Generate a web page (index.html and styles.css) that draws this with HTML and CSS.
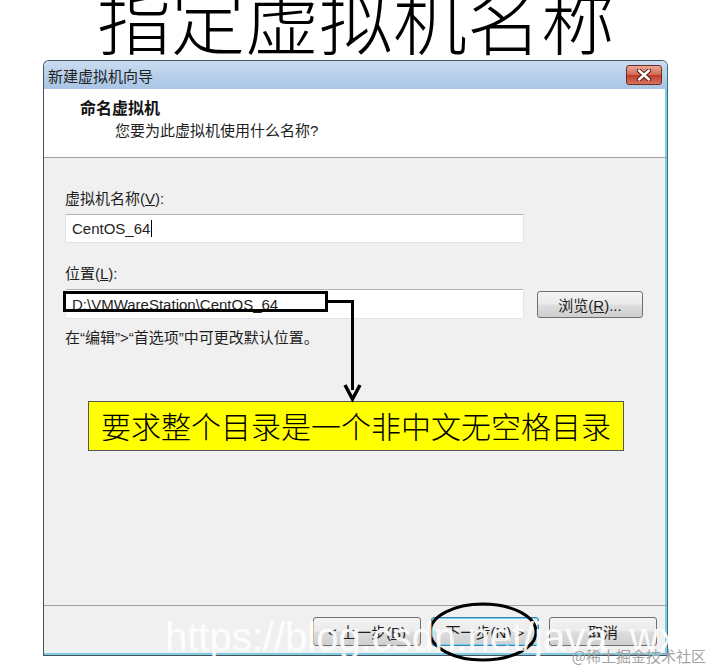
FILE: index.html
```html
<!DOCTYPE html>
<html lang="zh-CN">
<head>
    <meta charset="utf-8">
    <title>指定虚拟机名称</title>
    <link rel="stylesheet" href="styles.css">
</head>
<body>
    <div class="page">
        <h1 class="slide-title">指定虚拟机名称</h1>

        <div class="wizard">
            <div class="titlebar">
                <span class="titlebar-text">新建虚拟机向导</span>
                <button class="close-btn">
                    <svg width="16" height="12" viewBox="0 0 16 12">
                        <path d="M3 1.5 L13 10.5 M13 1.5 L3 10.5" stroke="#5a1a10" stroke-width="4.4" stroke-linecap="round"/>
                        <path d="M3 1.5 L13 10.5 M13 1.5 L3 10.5" stroke="#ffffff" stroke-width="2.4" stroke-linecap="round"/>
                    </svg>
                </button>
            </div>

            <div class="header">
                <div class="header-title">命名虚拟机</div>
                <div class="header-sub">您要为此虚拟机使用什么名称?</div>
            </div>

            <div class="body">
                <div class="label">虚拟机名称(<u>V</u>):</div>
                <div class="field">CentOS_64<span class="caret"></span></div>

                <div class="label label-gap">位置(<u>L</u>):</div>
                <div class="field-row">
                    <div class="field field-grow">D:\VMWareStation\CentOS_64</div>
                    <button class="btn btn-browse">浏览(<u>R</u>)...</button>
                </div>

                <p class="hint">在“编辑”&gt;“首选项”中可更改默认位置。</p>

                <div class="callout">要求整个目录是一个非中文无空格目录</div>
            </div>

            <div class="footer">
                <button class="btn">&lt; 上一步(<u>B</u>)</button>
                <button class="btn btn-default">下一步(<u>N</u>) &gt;</button>
                <button class="btn">取消</button>
            </div>
        </div>

        <svg class="marks" width="712" height="670" viewBox="0 0 712 670">
            <rect x="64.5" y="292.5" width="262" height="18" fill="none" stroke="#000" stroke-width="3"/>
            <path d="M326 301.5 H352.5 V390" fill="none" stroke="#000" stroke-width="3"/>
            <path d="M345 385 L352.5 399 L360 385" fill="none" stroke="#000" stroke-width="3.5" stroke-linejoin="miter"/>
            <ellipse cx="483" cy="632" rx="53" ry="28" fill="none" stroke="#000" stroke-width="3"/>
        </svg>

        <div class="watermark">https://blog.csdn.net/java_wx</div>
        <div class="credit">@稀土掘金技术社区</div>
    </div>
</body>
</html>
```

FILE: styles.css
```css
body {
    margin: 0;
    background-color: #ffffff;
    font-family: "Liberation Sans", "Noto Sans CJK SC", sans-serif;
    color: #1e1e1e;
}

.page {
    position: relative;
    width: 712px;
    height: 670px;
    overflow: hidden;
}

.slide-title {
    margin: -20px 0 0 0;
    font-family: "Noto Sans CJK SC", sans-serif;
    font-weight: 300;
    font-size: 74px;
    line-height: 74px;
    text-align: center;
    color: #000000;
}

.wizard {
    margin: 6px 0 0 43px;
    width: 623px;
    border: 1px solid #46525e;
    border-right-color: #2f6f86;
    border-radius: 6px 6px 0 0;
    background-color: #f0f0f0;
}

.titlebar {
    height: 28px;
    display: flex;
    align-items: center;
    justify-content: space-between;
    padding: 0 5px 0 4px;
    border-radius: 5px 5px 0 0;
    background: linear-gradient(#c9dcf0, #b4cde9 60%, #aac6e6);
}

.titlebar-text {
    font-family: "Noto Sans CJK SC", sans-serif;
    font-size: 15px;
    color: #222222;
}

.close-btn {
    width: 36px;
    height: 20px;
    padding: 0;
    display: flex;
    align-items: center;
    justify-content: center;
    border: 1px solid #6e2b22;
    border-radius: 3px;
    background: linear-gradient(#e9a898, #d46a55 48%, #c0392a 52%, #d9745f);
}

.header {
    height: 69px;
    padding: 9px 0 0 36px;
    box-sizing: border-box;
    background-color: #ffffff;
    border-bottom: 1px solid #a0a0a0;
    box-shadow: inset -2px 0 #7fcde2;
}

.header-title {
    font-family: "Noto Sans CJK SC", sans-serif;
    font-weight: bold;
    font-size: 16px;
    line-height: 18px;
    color: #111111;
}

.header-sub {
    margin: 6px 0 0 35px;
    font-size: 15px;
    line-height: 18px;
}

.body {
    position: relative;
    height: 447px;
    box-sizing: border-box;
    padding: 32px 21px 0 21px;
    box-shadow: inset -2px 0 #7fcde2;
}

.label {
    font-size: 15px;
    line-height: 18px;
}

.label u {
    text-decoration: underline;
}

.label-gap {
    margin-top: 22px;
}

.field {
    margin-top: 6px;
    width: 459px;
    height: 29px;
    box-sizing: border-box;
    padding-left: 6px;
    display: flex;
    align-items: center;
    background-color: #ffffff;
    border: 1px solid #dfe5ec;
    border-top-color: #abb3bd;
    border-radius: 2px;
    font-size: 15px;
}

.caret {
    width: 1px;
    height: 17px;
    margin-left: 1px;
    background-color: #000000;
}

.field-row {
    display: flex;
    align-items: center;
    gap: 13px;
    margin-top: 6px;
}

.field-row .field {
    margin-top: 0;
    height: 30px;
}

.btn {
    height: 29px;
    width: 108px;
    padding: 0;
    font-family: "Liberation Sans", "Noto Sans CJK SC", sans-serif;
    font-size: 15px;
    color: #1e1e1e;
    border: 1px solid #707070;
    border-radius: 3px;
    background: linear-gradient(#f3f3f3, #ebebeb 48%, #dddddd 52%, #cfcfcf);
}

.btn-browse {
    width: 106px;
    height: 27px;
}

.btn-default {
    border-color: #3c7fb1;
    box-shadow: inset 0 0 0 1px #6fd4f4;
}

.hint {
    margin: 10px 0 0 0;
    font-size: 15px;
    line-height: 18px;
}

.callout {
    margin: 54px 0 0 23px;
    width: 536px;
    height: 50px;
    box-sizing: border-box;
    border: 1px solid #555555;
    background-color: #ffff00;
    font-family: "Noto Sans CJK SC", sans-serif;
    font-weight: 300;
    font-size: 30px;
    line-height: 46px;
    text-align: center;
    color: #000000;
}

.footer {
    height: 50px;
    box-sizing: border-box;
    border-top: 1px solid #a0a0a0;
    padding: 11px 10px 0 0;
    display: flex;
    justify-content: flex-end;
    gap: 10px;
    box-shadow: inset -2px 0 #7fcde2, inset 0 -2px #7fcde2;
}

.marks {
    position: absolute;
    left: 0;
    top: 0;
    pointer-events: none;
}

.watermark {
    position: absolute;
    left: 165px;
    top: 617px;
    font-family: "Liberation Sans", sans-serif;
    font-size: 40px;
    line-height: 40px;
    color: rgba(255, 255, 255, 0.92);
    white-space: nowrap;
}

.credit {
    position: absolute;
    right: 6px;
    top: 647px;
    font-family: "Noto Sans CJK SC", sans-serif;
    font-size: 15px;
    line-height: 18px;
    color: #a3a3a3;
}
```
